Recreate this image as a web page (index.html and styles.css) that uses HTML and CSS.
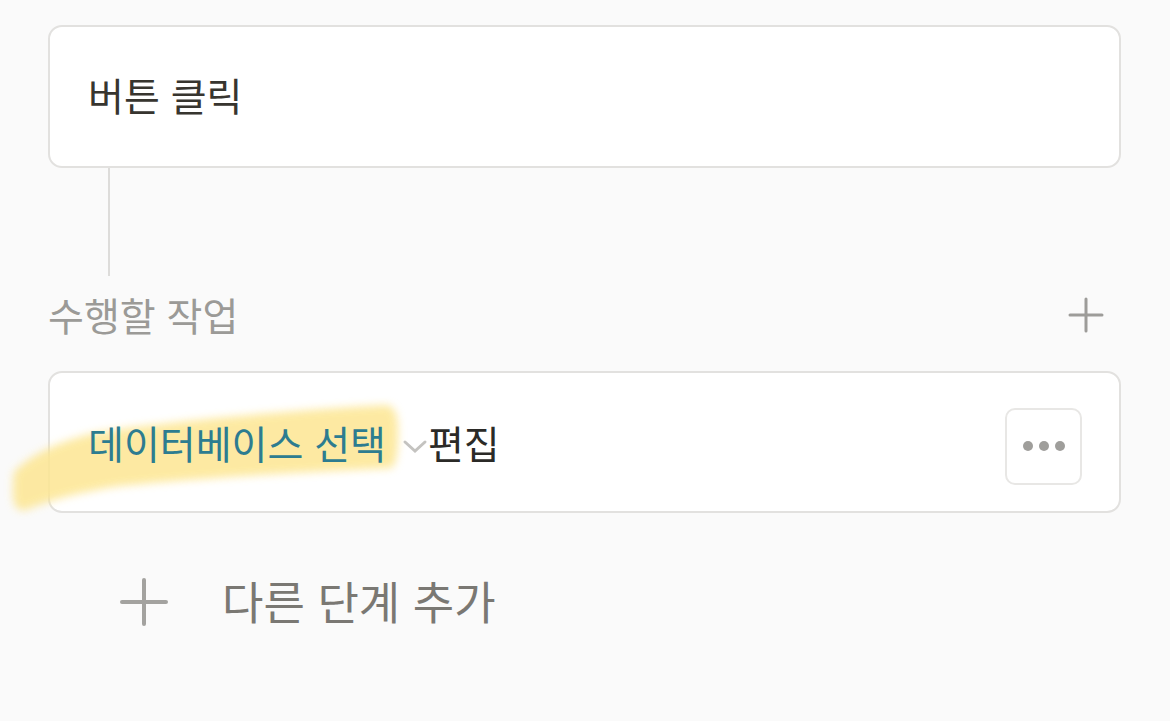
FILE: index.html
```html
<!DOCTYPE html>
<html lang="ko">
<head>
<meta charset="utf-8">
<link rel="stylesheet" href="styles.css">
</head>
<body>
<div class="page">
  <div class="card trigger-card">
    <span class="trigger-text">버튼 클릭</span>
  </div>
  <div class="connector"></div>
  <div class="section-row">
    <span class="section-label">수행할 작업</span>
    <svg class="add-icon" width="36" height="36" viewBox="0 0 36 36"><path d="M18 2V34M2 18H34" stroke="#9d9c99" stroke-width="3" stroke-linecap="round"/></svg>
  </div>
  <div class="card action-card">
    <div class="action-text">
      <span class="db-select">데이터베이스 선택</span>
      <svg class="chevron" width="26" height="16" viewBox="0 0 26 16"><path d="M3 4L13 13L23 4" stroke="#c4c3c0" stroke-width="3" fill="none" stroke-linecap="round"/></svg>
      <span class="edit">편집</span>
    </div>
    <button class="more-btn">
      <svg width="44" height="12" viewBox="0 0 44 12"><circle cx="6" cy="6" r="5" fill="#9f9e9b"/><circle cx="22" cy="6" r="5" fill="#9f9e9b"/><circle cx="38" cy="6" r="5" fill="#9f9e9b"/></svg>
    </button>
  </div>
  <div class="add-step">
    <svg class="add-step-icon" width="48" height="48" viewBox="0 0 48 48"><path d="M24 2V46M2 24H46" stroke="#a3a29f" stroke-width="4" stroke-linecap="round"/></svg>
    <span class="add-step-text">다른 단계 추가</span>
  </div>
  <svg class="highlight" width="1170" height="721" viewBox="0 0 1170 721">
    <defs><filter id="blur" x="-10%" y="-50%" width="120%" height="200%"><feGaussianBlur stdDeviation="4"/></filter></defs>
    <path d="M14 472 C30 455 60 440 100 432 C180 420 300 410 386 405 C395 406 398 415 398 430 C398 450 397 462 392 468 C300 472 200 478 120 486 C80 492 50 500 26 510 C16 513 12 502 13 490 C13 482 13 476 14 472 Z" fill="#fde692" filter="url(#blur)"/>
  </svg>
</div>
</body>
</html>
```
FILE: styles.css
```css
html, body {
  margin: 0;
  padding: 0;
  background: #fafafa;
}
.page {
  position: relative;
  width: 1170px;
  height: 721px;
  padding: 25px 0 0 48px;
  box-sizing: border-box;
  display: flex;
  flex-direction: column;
  font-family: "Noto Sans CJK KR", "Noto Sans", sans-serif;
}
.card {
  width: 1073px;
  box-sizing: border-box;
  background: #fff;
  border: 2.5px solid #e2e1df;
  border-radius: 14px;
  display: flex;
  align-items: center;
}
.trigger-card {
  height: 143px;
  padding-left: 38px;
}
.trigger-text {
  font-size: 39px;
  color: #37352f;
  line-height: 1;
  padding-bottom: 4px;
}
.connector {
  width: 2px;
  height: 108px;
  margin-left: 60px;
  background: #dddcda;
}
.section-row {
  width: 1073px;
  display: flex;
  align-items: center;
  justify-content: space-between;
  padding-top: 16px;
  margin-bottom: 35px;
  height: 44px;
}
.section-label {
  font-size: 39px;
  color: #9b9a97;
  line-height: 44px;
}
.add-icon {
  margin-right: 17px;
  margin-top: 2px;
}
.action-card {
  height: 142px;
  padding: 0 37px 0 38px;
  justify-content: space-between;
}
.action-text {
  position: relative;
  z-index: 2;
  display: flex;
  align-items: center;
  font-size: 39px;
  line-height: 1;
}
.db-select {
  color: #2d7c90;
}
.chevron {
  margin-left: 16px;
  margin-top: 8px;
}
.edit {
  color: #2b2a27;
}
.more-btn {
  width: 77px;
  height: 77px;
  border: 2px solid #e8e7e5;
  border-radius: 10px;
  background: #fff;
  display: flex;
  align-items: center;
  justify-content: center;
  padding: 0;
  margin-top: 8px;
}
.add-step {
  display: flex;
  align-items: center;
  height: 60px;
  margin-top: 57px;
  padding-left: 72px;
}
.add-step-icon {
  margin-right: 54px;
  margin-top: 4px;
}
.add-step-text {
  font-size: 45px;
  color: #7a7873;
  line-height: 1;
}
.highlight {
  position: absolute;
  top: 0;
  left: 0;
  z-index: 1;
  pointer-events: none;
  opacity: 0.85;
}
```
